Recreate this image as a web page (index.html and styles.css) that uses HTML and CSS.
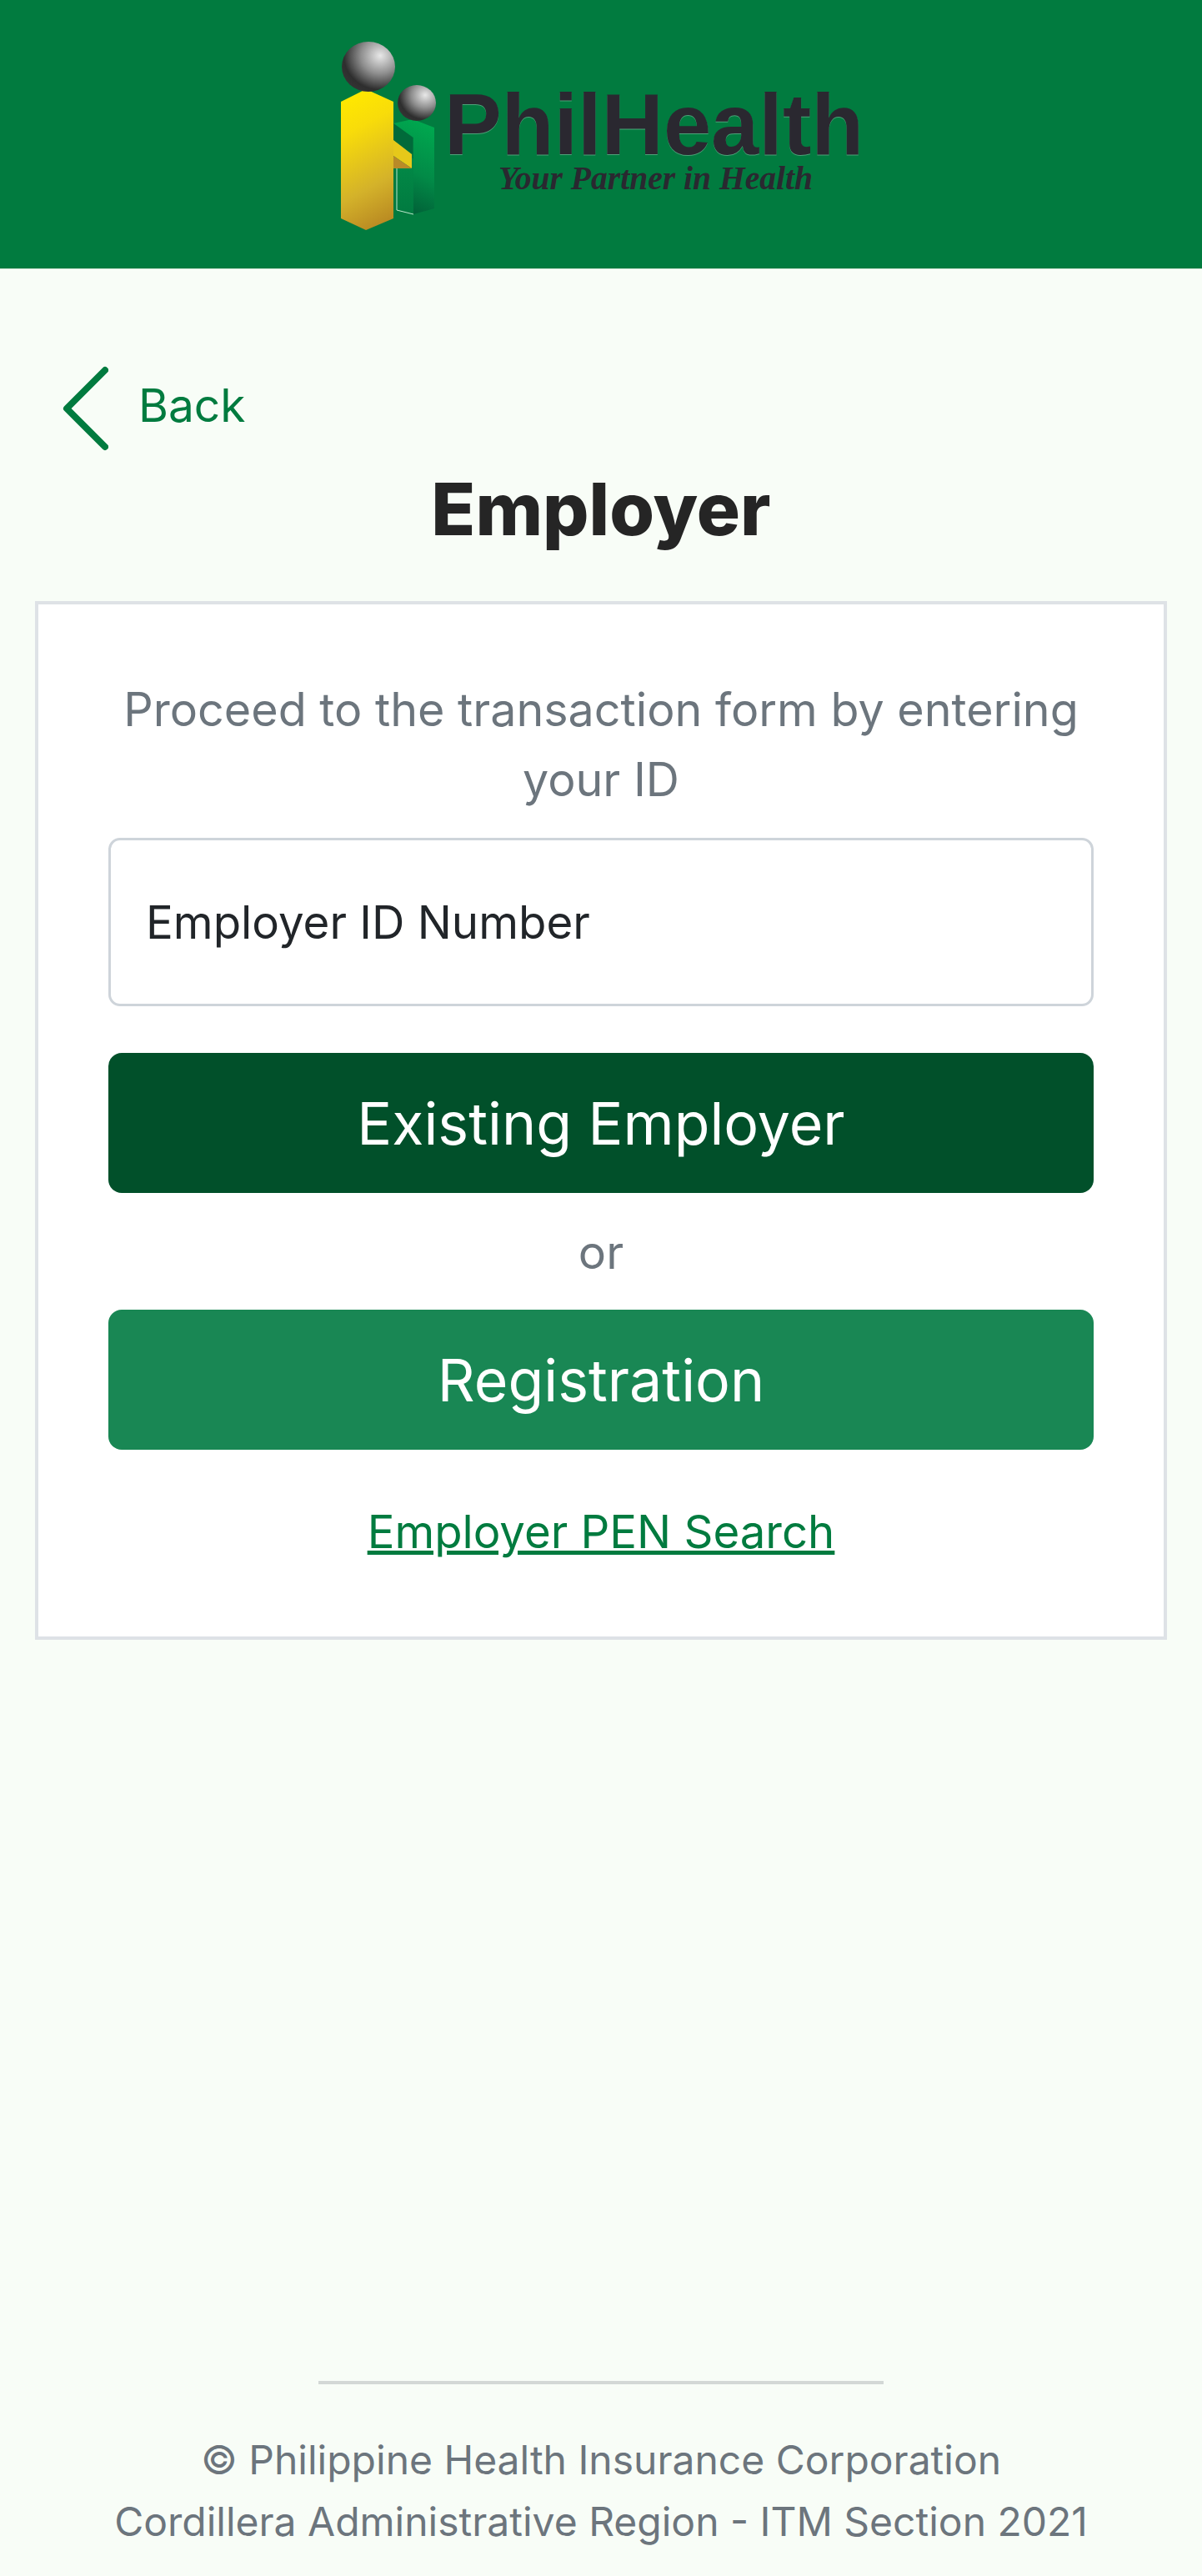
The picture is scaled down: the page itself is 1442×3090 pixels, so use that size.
FILE: index.html
```html
<!DOCTYPE html>
<html lang="en">
<head>
<meta charset="utf-8">
<title>PhilHealth Employer</title>
<link rel="stylesheet" href="styles.css">
</head>
<body>
<div class="page">
  <header class="topbar">
    <svg class="logo" width="660" height="240" viewBox="400 40 660 240" xmlns="http://www.w3.org/2000/svg" role="img" aria-label="PhilHealth logo">
      <defs>
        <radialGradient id="ball" cx="0.72" cy="0.28" r="0.8">
          <stop offset="0" stop-color="#e8e8e8"/>
          <stop offset="0.45" stop-color="#8f8f8f"/>
          <stop offset="0.85" stop-color="#2e2e2e"/>
          <stop offset="1" stop-color="#333"/>
        </radialGradient>
        <linearGradient id="yellow" x1="0.4" y1="0" x2="0.6" y2="1">
          <stop offset="0" stop-color="#ffe800"/>
          <stop offset="0.25" stop-color="#f8dc0a"/>
          <stop offset="0.7" stop-color="#d4b22a"/>
          <stop offset="1" stop-color="#b98a22"/>
        </linearGradient>
        <linearGradient id="green" x1="0.6" y1="0" x2="0.4" y2="1">
          <stop offset="0" stop-color="#00a84f"/>
          <stop offset="0.55" stop-color="#028a47"/>
          <stop offset="1" stop-color="#015f37"/>
        </linearGradient>
        <linearGradient id="green-left" x1="0" y1="0" x2="0" y2="1">
          <stop offset="0" stop-color="#028a47"/>
          <stop offset="1" stop-color="#017a40"/>
        </linearGradient>
      </defs>
      <path d="M472 148 L495 143 L521 153 L521 250 L496 257 L496 165 Z" fill="url(#green)"/>
      <path d="M476 190 L496 190 L496 257 L476 252 Z" fill="url(#green-left)"/>
      <path d="M476 202 L476 252 L496 257" fill="none" stroke="#bfe8cc" stroke-width="1"/>
      <path d="M472 148 L495 165 L495 185 L472 168 Z" fill="#016a3a"/>
      <path d="M472 168 L494 185 L494 202 L472 187 Z" fill="#e6c81a"/>
      <path d="M472 187 L494 202 L472 202 Z" fill="#b98a28"/>
      <path d="M409 122 L439 107 L472 122 L472 262 L439 276 L409 262 Z" fill="url(#yellow)"/>
      <ellipse cx="442" cy="80" rx="32" ry="30" fill="url(#ball)"/>
      <ellipse cx="500" cy="123.500" rx="23" ry="21.500" fill="url(#ball)"/>
      <text class="logo-name" x="533" y="185" textLength="503" lengthAdjust="spacingAndGlyphs">PhilHealth</text>
      <text class="logo-tag" x="598" y="227" textLength="377" lengthAdjust="spacingAndGlyphs">Your Partner in Health</text>
    </svg>
  </header>

  <main class="content">
    <a class="back" href="#">
      <svg class="back-icon" width="56" height="104" viewBox="0 0 56 104" xmlns="http://www.w3.org/2000/svg" aria-hidden="true">
        <path d="M52 5 L6 51 L52 97" fill="none" stroke="#017b3f" stroke-width="8" stroke-linecap="round" stroke-linejoin="round"/>
      </svg>
      <span class="back-label">Back</span>
    </a>
    <h1 class="title">Employer</h1>

    <section class="card">
      <p class="lead">Proceed to the transaction form by entering your ID</p>
      <input class="field" type="text" placeholder="Employer ID Number">
      <button class="btn btn-dark" type="button">Existing Employer</button>
      <p class="or">or</p>
      <button class="btn btn-light" type="button">Registration</button>
      <a class="pen" href="#">Employer PEN Search</a>
    </section>
  </main>

  <footer class="foot">
    <hr class="rule">
    <p class="foot-text">© Philippine Health Insurance Corporation<br>Cordillera Administrative Region - ITM Section 2021</p>
  </footer>
</div>
</body>
</html>
```

FILE: styles.css
```css
* { box-sizing: border-box; }
html, body { margin: 0; padding: 0; }
body {
  background: #f8fdf7;
  font-family: Inter, "Noto Sans", sans-serif;
  color: #212529;
}
.page {
  height: 3090px;
  display: flex;
  flex-direction: column;
  overflow: hidden;
}
.topbar {
  height: 323px;
  background: #017b3f;
  border-bottom: 1px solid #d8e8dc;
  display: flex;
  justify-content: center;
  padding: 40px 0 0 0;
}
.logo { display: block; margin-left: 18px; }
.logo-name {
  font-family: "Liberation Sans", Arial, sans-serif;
  font-weight: 700;
  font-size: 103px;
  fill: #2a2830;
  filter: drop-shadow(0 1px 0 rgba(255, 255, 255, 0.3));
}
.logo-tag {
  font-family: "Liberation Serif", "Times New Roman", serif;
  font-weight: 700;
  font-style: italic;
  font-size: 40px;
  fill: #2a2830;
}
.content {
  padding: 116px 42px 0;
}
.back {
  display: flex;
  align-items: center;
  color: #017b3f;
  text-decoration: none;
  margin-left: 32px;
  height: 104px;
}
.back-label {
  font-size: 55px;
  line-height: 1;
  margin: 0 0 10px 36px;
}
.title {
  margin: 20px 0 0;
  text-align: center;
  font-size: 87px;
  line-height: 96px;
  font-weight: 800;
  color: #252525;
}
.card {
  margin-top: 62px;
  height: 1246px;
  background: #fff;
  border: 4px solid #dee2e6;
  padding: 84px 84px 0;
  display: flex;
  flex-direction: column;
  align-items: stretch;
}
.lead {
  margin: 0;
  text-align: center;
  font-size: 55.600px;
  line-height: 84px;
  color: #6c757d;
}
.field {
  margin-top: 28px;
  height: 202px;
  border: 3.500px solid #ced4da;
  border-radius: 14px;
  background: #fff;
  padding: 0 42px;
  font: 400 54.600px Inter, sans-serif;
  color: #212529;
}
.field::placeholder { color: #212529; opacity: 1; }
.btn {
  height: 168px;
  border: 0;
  border-radius: 16px;
  color: #fff;
  font: 400 69.800px Inter, sans-serif;
  padding: 0;
}
.btn-dark { margin-top: 56px; background: #01502a; }
.btn-light { background: #198754; }
.or {
  margin: 0;
  height: 140px;
  display: flex;
  align-items: center;
  justify-content: center;
  font-size: 55.600px;
  color: #6c757d;
}
.pen {
  margin-top: 56px;
  align-self: center;
  font-size: 54.500px;
  line-height: 84px;
  color: #017b3f;
}
.foot {
  margin-top: auto;
  padding-bottom: 28px;
  display: flex;
  flex-direction: column;
  align-items: center;
}
.rule {
  width: 678px;
  height: 4px;
  margin: 0;
  border: 0;
  background: #d3d8d6;
}
.foot-text {
  margin: 54px 0 0;
  text-align: center;
  font-size: 48px;
  line-height: 74px;
  color: #6c757d;
}
```
